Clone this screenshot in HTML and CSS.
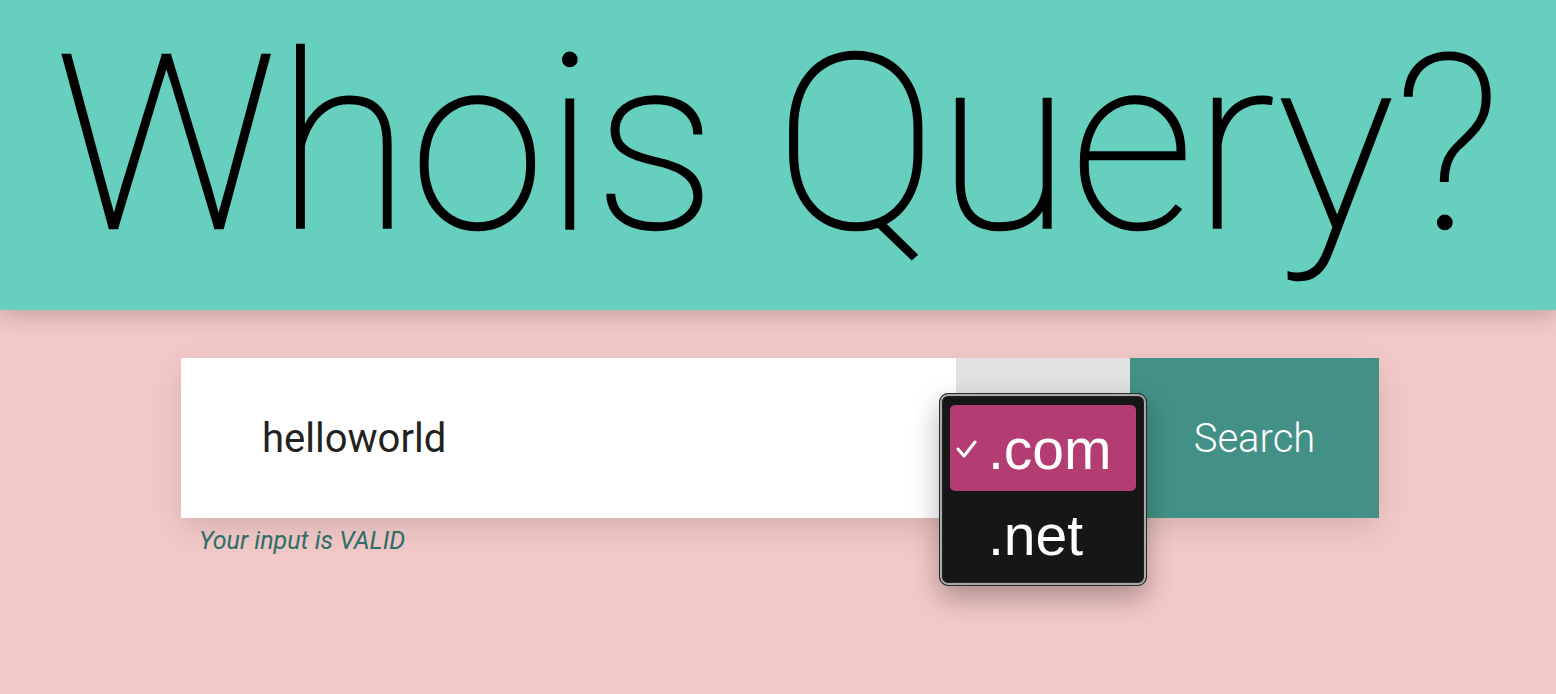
FILE: index.html
```html
<!DOCTYPE html>
<html>
<head>
<meta charset="utf-8">
<link rel="stylesheet" href="styles.css">
</head>
<body>
<header class="hero">
  <h1 class="title">Whois Query?</h1>
</header>
<main class="main">
  <form class="search">
    <div class="field">
      <div class="input">helloworld</div>
      <div class="select">
        <div class="popup">
          <div class="option selected">
            <svg class="check" width="22" height="20" viewBox="0 0 22 20"><polyline points="2,10 8,17 19,3" fill="none" stroke="#fff" stroke-width="3" stroke-linecap="round" stroke-linejoin="round"/></svg>
            <span>.com</span>
          </div>
          <div class="option"><span>.net</span></div>
        </div>
      </div>
      <button class="btn" type="button">Search</button>
    </div>
    <p class="hint">Your input is VALID</p>
  </form>
</main>
</body>
</html>
```
FILE: styles.css
```css
html, body {
  margin: 0;
  padding: 0;
}
body {
  background: #f2c9c8;
  height: 694px;
  overflow: hidden;
  font-family: Roboto, "Liberation Sans", sans-serif;
}
.hero {
  height: 310px;
  background: #66cfbe;
  box-shadow: 0 4px 24px rgba(0, 0, 0, 0.22);
  position: relative;
  z-index: 1;
  display: flex;
  justify-content: center;
}
.title {
  margin: 0;
  font-family: Roboto, sans-serif;
  font-weight: 100;
  font-size: 244px;
  line-height: 1;
  color: #000;
  -webkit-text-stroke: 2.5px #000;
  padding-top: 23px;
  white-space: nowrap;
}
.main {
  display: flex;
  justify-content: center;
  padding-top: 48px;
}
.search {
  margin: 0 0 0 4px;
  width: 1198px;
}
.field {
  display: flex;
  height: 160px;
  box-shadow: 0 10px 30px rgba(0, 0, 0, 0.12);
}
.input {
  width: 775px;
  box-sizing: border-box;
  background: #fff;
  padding-left: 81px;
  display: flex;
  align-items: center;
  font-size: 40px;
  color: #222;
}
.select {
  width: 174px;
  background: #e1e1e3;
  position: relative;
}
.popup {
  position: absolute;
  left: -17px;
  top: 35px;
  width: 208px;
  height: 193px;
  box-sizing: border-box;
  background: #161616;
  border: 1px solid #2a2a2a;
  border-radius: 9px;
  box-shadow: inset 0 0 0 2px #a9a9a9, inset 0 0 0 3px #222, 0 12px 28px rgba(0, 0, 0, 0.3);
  padding: 11px 10px;
  z-index: 2;
  font-family: "Liberation Sans", Arial, sans-serif;
  color: #fff;
}
.option {
  height: 86px;
  display: flex;
  align-items: center;
  padding-left: 38px;
  position: relative;
  font-size: 57px;
  border-radius: 5px;
}
.option span {
  position: relative;
  top: 1px;
}
.option.selected {
  background: #b33c72;
}
.check {
  position: absolute;
  left: 6px;
  top: 34px;
}
.btn {
  width: 249px;
  border: 0;
  margin: 0;
  background: #439186;
  color: #fff;
  font-family: Roboto, sans-serif;
  font-weight: 300;
  font-size: 40px;
  padding: 0;
}
.hint {
  margin: 8px 0 0 18px;
  font-style: italic;
  font-size: 25px;
  color: #2e6e66;
}
```
